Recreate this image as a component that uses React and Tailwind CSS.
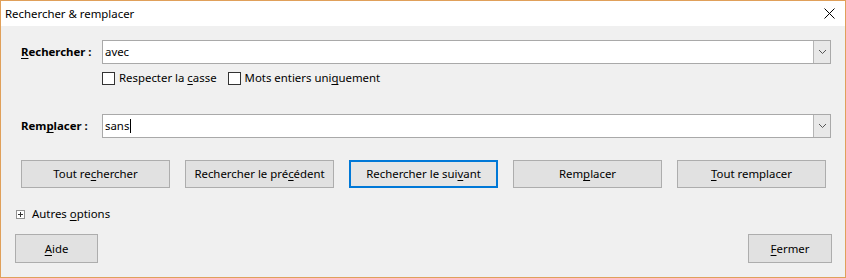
import React from 'react';

const font = { fontFamily: '"Noto Sans", "Liberation Sans", sans-serif' };

const U = ({ children }) => <span className="underline underline-offset-2">{children}</span>;

const Combo = ({ value, caret }) => (
	<div className="flex h-[24px] w-[729px] border border-[#a9a9a9] bg-white">
		<div className="flex flex-1 items-center pl-[2px] text-[11.4px]">
			{value}
			{caret && <span className="ml-[1px] inline-block h-[14px] w-px bg-black" />}
		</div>
		<div className="flex w-[17px] items-center justify-center border-l border-[#b5b5b5] bg-[#e8e8e8]">
			<svg width="9" height="6" viewBox="0 0 9 6">
				<path d="M1 1 L4.5 4.5 L8 1" fill="none" stroke="#555" strokeWidth="1" />
			</svg>
		</div>
	</div>
);

const Check = ({ children }) => (
	<label className="flex items-center gap-[4px] text-[11.4px]">
		<span className="h-[13px] w-[13px] border border-[#333] bg-white" />
		<span>{children}</span>
	</label>
);

const Button = ({ children, active, w = 'w-[149px]', h = 'h-[28px]' }) => (
	<button
		className={
			active
				? `${w} ${h} border-2 border-[#0078d7] bg-[#e5e5e5] text-[11.4px]`
				: `${w} ${h} border border-[#adadad] bg-[#e1e1e1] text-[11.4px]`
		}
	>
		{children}
	</button>
);

const App = () => {
	return (
		<div style={font} className="flex h-[278px] w-[846px] flex-col border border-[#e0a05a] bg-[#f0f0f0] text-black">
			{/* title bar */}
			<div className="flex h-[25px] items-center justify-between bg-white pl-[4px] pr-[10px] text-[11.4px]">
				<span>Rechercher &amp; remplacer</span>
				<svg width="11" height="11" viewBox="0 0 11 11">
					<path d="M0.5 0.5 L10.5 10.5 M10.5 0.5 L0.5 10.5" stroke="#000" strokeWidth="1" />
				</svg>
			</div>

			<div className="flex flex-col pl-[20px]">
				<div className="mt-[14px] flex items-center">
					<span className="w-[81px] text-[11.4px] font-bold"><U>R</U>echercher :</span>
					<Combo value="avec" />
				</div>
				<div className="mt-[7px] flex h-[14px] items-center gap-[11px] pl-[81px]">
					<Check>Respecter la <U>c</U>asse</Check>
					<Check>Mots entiers uni<U>q</U>uement</Check>
				</div>

				<div className="mt-[29px] flex items-center">
					<span className="w-[81px] text-[11.4px] font-bold">Rem<U>p</U>lacer :</span>
					<Combo value="sans" caret />
				</div>

				<div className="mt-[22px] flex gap-[15px]">
					<Button>Tout re<U>c</U>hercher</Button>
					<Button>Rechercher le pré<U>c</U>édent</Button>
					<Button active>Rechercher le sui<U>v</U>ant</Button>
					<Button>Rem<U>p</U>lacer</Button>
					<Button><U>T</U>out remplacer</Button>
				</div>

				<div className="ml-[-5px] mt-[18px] flex h-[16px] items-center gap-[7px] text-[11.4px]">
					<span className="flex h-[9px] w-[9px] items-center justify-center border border-[#919191] bg-white">
						<svg width="7" height="7" viewBox="0 0 7 7">
							<path d="M1 3.5 H6 M3.5 1 V6" stroke="#333" strokeWidth="1" />
						</svg>
					</span>
					<span>Autres <U>o</U>ptions</span>
				</div>
			</div>

			<div className="mt-[12px] flex justify-between pl-[14px] pr-[13px]">
				<Button w="w-[83px]" h="h-[29px]"><U>A</U>ide</Button>
				<Button w="w-[84px]" h="h-[29px]"><U>F</U>ermer</Button>
			</div>
		</div>
	);
};

export default App;
